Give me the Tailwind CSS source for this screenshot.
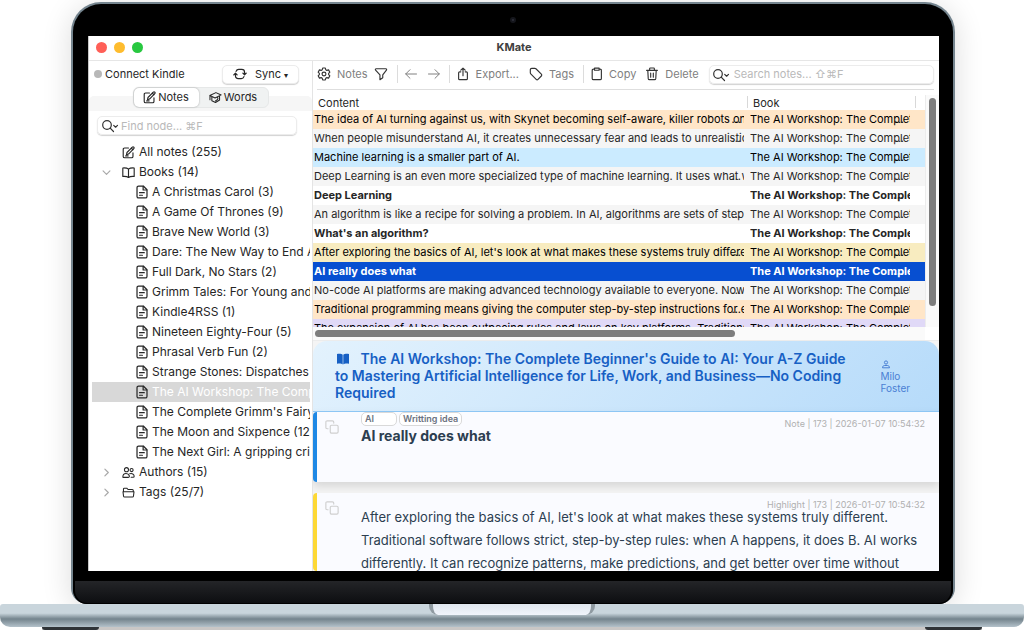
<!DOCTYPE html>
<html lang="en">
  <head>
    <meta charset="UTF-8" />
    <meta name="viewport" content="width=device-width, initial-scale=1.0" />
    <title>KMate</title>
    <script src="https://cdn.jsdelivr.net/npm/@tailwindcss/browser@4"></script>
  </head>
  <body class="h-screen overflow-hidden bg-white font-['Inter','Noto_Sans',sans-serif] text-[#262626]">
    <!-- Icon sprite -->
    <svg class="hidden" xmlns="http://www.w3.org/2000/svg">
      <symbol id="i-edit" viewBox="0 0 16 16" fill="none" stroke="currentColor" stroke-width="1.4" stroke-linecap="round" stroke-linejoin="round">
        <path d="M8 2.500H3.200C2 2.500 1.500 3 1.500 4.200V12.800c0 1.200.5 1.700 1.700 1.700h8.600c1.200 0 1.700-.5 1.700-1.700V8.500" />
        <path d="M5.500 10.800l.6-2.800 6.600-6.600c.6-.6 1.300-.5 1.800 0s.6 1.200 0 1.800L8 9.900z" />
        <path d="M11.500 2.700l1.900 1.900M4.500 12.200h3" />
      </symbol>
      <symbol id="i-doc" viewBox="0 0 16 16" fill="none" stroke="currentColor" stroke-width="1.400" stroke-linecap="round" stroke-linejoin="round">
        <path d="M9.500 1.200H4.200C3 1.200 2.300 1.800 2.300 3v10c0 1.200.7 1.800 1.900 1.800h7.600c1.200 0 1.900-.6 1.900-1.800V5.400z" />
        <path d="M9.300 1.500v4.200h4.200M5.200 8.800h5.400M5.200 11.700h3.300" />
      </symbol>
      <symbol id="i-book" viewBox="0 0 16 16" fill="none" stroke="currentColor" stroke-width="1.400" stroke-linejoin="round">
        <path d="M8 3.800C6.500 2.500 4 2.200 1 2.400v10.400c3-.2 5.500 0 7 1.300 1.500-1.300 4-1.500 7-1.300V2.400c-3-.2-5.500.1-7 1.400zM8 3.800v10.300" />
      </symbol>
      <symbol id="i-people" viewBox="0 0 16 16" fill="none" stroke="currentColor" stroke-width="1.300" stroke-linecap="round" stroke-linejoin="round">
        <circle cx="5.500" cy="4.500" r="2.500" />
        <circle cx="11.800" cy="5" r="1.900" />
        <path d="M1 13.800c0-3 1.500-4.600 4-4.600 1.800 0 3.500 1.200 4 2.800.4 1.300-.3 2-1.500 2H1.500zM9.500 9.500c2.800-1 5.500.7 5.500 3.200 0 .8-.5 1.200-1.300 1.200h-2.500" />
      </symbol>
      <symbol id="i-folder" viewBox="0 0 16 16" fill="none" stroke="currentColor" stroke-width="1.300" stroke-linejoin="round">
        <path d="M1.800 7V3.800c0-.7.400-1.100 1.100-1.100h3l1.500 1.600h5.300c.8 0 1.200.4 1.200 1.200V7M1.200 7h13.600l-.7 5.400c-.1.800-.6 1.200-1.300 1.200H3.200c-.8 0-1.200-.4-1.300-1.200z" />
      </symbol>
      <symbol id="i-right" viewBox="0 0 10 10" fill="none" stroke="currentColor" stroke-width="1.300" stroke-linecap="round" stroke-linejoin="round">
        <path d="M3.200 1.200L7 5 3.200 8.800" />
      </symbol>
      <symbol id="i-down" viewBox="0 0 10 10" fill="none" stroke="currentColor" stroke-width="1.300" stroke-linecap="round" stroke-linejoin="round">
        <path d="M1.200 3.200L5 7l3.800-3.800" />
      </symbol>
      <symbol id="i-search" viewBox="0 0 18 14" fill="none" stroke="currentColor" stroke-width="1.200" stroke-linecap="round" stroke-linejoin="round">
        <circle cx="6" cy="6" r="4.300" />
        <path d="M9.200 9.200l3.300 3.300M12.700 6.400l1.900 1.800 1.900-1.800" />
      </symbol>
      <symbol id="i-copy2" viewBox="0 0 16 16" fill="none" stroke="currentColor" stroke-width="1.300" stroke-linecap="round" stroke-linejoin="round">
        <rect x="6" y="6" width="9" height="9" rx="1.500" />
        <path d="M3.500 10H2.500C1.500 10 1 9.500 1 8.500v-6C1 1.500 1.500 1 2.500 1h6c1 0 1.500.5 1.500 1.500v1" />
      </symbol>
    </svg>

    <div class="flex h-full flex-col pt-[2px]">
      <!-- Lid -->
      <div class="mr-[69px] ml-[71px] flex min-h-0 flex-1 flex-col rounded-t-[30px] rounded-b-[16px] border-2 border-b-0 border-[#75858f] bg-black shadow-[0_4px_30px_rgba(0,0,0,0.14)]">
        <div class="flex h-8 shrink-0 items-center justify-center">
          <span class="h-[6px] w-[6px] rounded-full border-2 border-[#15161c] bg-[#30323c]"></span>
        </div>

        <!-- Display -->
        <div class="mr-[14px] ml-[15px] flex min-h-0 flex-1 flex-col overflow-hidden border-l border-[#c8c8c8] bg-white">
          <header class="relative flex h-[25px] shrink-0 items-center gap-[7px] border-b border-[#e6e6e6] px-[7px] pb-[2px]">
            <span class="h-[11px] w-[11px] rounded-full bg-[#ff5f57]"></span>
            <span class="h-[11px] w-[11px] rounded-full bg-[#febc2e]"></span>
            <span class="h-[11px] w-[11px] rounded-full bg-[#28c840]"></span>
            <h1 class="absolute inset-x-0 text-center text-[11px] font-bold text-[#404040]">KMate</h1>
          </header>

          <div class="flex min-h-0 flex-1">
            <!-- Sidebar -->
            <aside class="flex w-[224px] shrink-0 flex-col border-r border-[#e4e4e4]">
              <div class="flex h-[26px] shrink-0 items-center pr-[13px] pl-[5px]">
                <span class="mr-[3px] h-2 w-2 rounded-full bg-[#b8b8b8]"></span>
                <span class="text-[11px]">Connect Kindle</span>
                <button class="ml-auto flex h-[19px] w-[77px] items-center justify-center gap-2 rounded-[5px] border border-[#ececec] bg-white text-[11px] shadow-[0_1px_1px_rgba(0,0,0,0.18)]">
                  <svg class="h-[14px] w-[14px]" viewBox="0 0 16 16" fill="none" stroke="currentColor" stroke-width="1.400" stroke-linecap="round" stroke-linejoin="round">
                    <path d="M3.500 5C4 3.500 5 2.800 6.500 2.800h3.500c2 0 3.200 1.200 3.200 3.200v2.500M11.300 7l1.900 1.900L15.100 7" />
                    <path d="M12.500 11c-.5 1.500-1.500 2.200-3 2.200H6c-2 0-3.200-1.200-3.200-3.200V7.500M.9 9l1.900-1.900L4.700 9" />
                  </svg>
                  <span>Sync <span class="text-[8px]">▾</span></span>
                </button>
              </div>
              <div class="relative mt-[9px] flex h-[15px] shrink-0 items-start justify-center rounded-t-[5px] bg-[#f6f6f6]">
                <div class="absolute -top-[9px] flex h-[21px] w-[136px] rounded-[6px] border border-[#e6e8e8] bg-[#f0f2f2]">
                  <button class="flex w-[65px] items-center justify-center gap-[2px] rounded-[5px] bg-white text-[11px] shadow-[0_0_2px_rgba(0,0,0,0.35)]">
                    <svg class="h-[13px] w-[13px]"><use href="#i-edit" /></svg>
                    Notes
                  </button>
                  <button class="flex flex-1 items-center justify-center gap-[2px] text-[11px]">
                    <svg class="h-[13px] w-[13px]" viewBox="0 0 16 16" fill="none" stroke="currentColor" stroke-width="1.300" stroke-linejoin="round" stroke-linecap="round">
                      <path d="M1 5.500L8.500 2 15 4.800 7.500 8.500zM3.500 7v5l4.500 2.200L13 11V6M1.200 5.800v5M7.500 8.500c2-1.500 3.500-.8 3.500.8 0 1.500-1.500 2-3 2.900" />
                    </svg>
                    Words
                  </button>
                </div>
              </div>
              <div class="relative mt-[5px] mr-[15px] ml-[8px] shrink-0">
                <svg class="absolute top-[3px] left-[4px] h-[14px] w-[18px] text-[#333]"><use href="#i-search" /></svg>
                <label for="find" class="sr-only">Find node</label>
                <input id="find" type="text" placeholder="Find node... ⌘F" class="block h-[19px] w-full rounded-[5px] border border-[#ececec] pl-[23px] text-[11px] shadow-[0_1px_1px_rgba(0,0,0,0.18)] placeholder:text-[#b9b9b9]" />
              </div>

              <nav class="mt-[7px] mr-[2px] ml-[3px] overflow-hidden text-[12px] leading-5 whitespace-nowrap">
                <ul>
                  <li><a href="#" class="flex items-center gap-1 pl-[30px]"><svg class="h-[13px] w-[13px] shrink-0"><use href="#i-edit" /></svg>All notes (255)</a></li>
                  <li>
                    <a href="#" class="flex items-center gap-1 pl-[10px]"><svg class="mr-[7px] h-[9px] w-[9px] shrink-0 text-[#a8a8a8]"><use href="#i-down" /></svg><svg class="h-[13px] w-[13px] shrink-0"><use href="#i-book" /></svg>Books (14)</a>
                    <ul>
                      <li><a href="#" class="flex items-center gap-[3px] pl-[43px]"><svg class="h-[14px] w-[14px] shrink-0"><use href="#i-doc" /></svg>A Christmas Carol (3)</a></li>
                      <li><a href="#" class="flex items-center gap-[3px] pl-[43px]"><svg class="h-[14px] w-[14px] shrink-0"><use href="#i-doc" /></svg>A Game Of Thrones (9)</a></li>
                      <li><a href="#" class="flex items-center gap-[3px] pl-[43px]"><svg class="h-[14px] w-[14px] shrink-0"><use href="#i-doc" /></svg>Brave New World (3)</a></li>
                      <li><a href="#" class="flex items-center gap-[3px] pl-[43px]"><svg class="h-[14px] w-[14px] shrink-0"><use href="#i-doc" /></svg>Dare: The New Way to End A</a></li>
                      <li><a href="#" class="flex items-center gap-[3px] pl-[43px]"><svg class="h-[14px] w-[14px] shrink-0"><use href="#i-doc" /></svg>Full Dark, No Stars (2)</a></li>
                      <li><a href="#" class="flex items-center gap-[3px] pl-[43px]"><svg class="h-[14px] w-[14px] shrink-0"><use href="#i-doc" /></svg>Grimm Tales: For Young and</a></li>
                      <li><a href="#" class="flex items-center gap-[3px] pl-[43px]"><svg class="h-[14px] w-[14px] shrink-0"><use href="#i-doc" /></svg>Kindle4RSS (1)</a></li>
                      <li><a href="#" class="flex items-center gap-[3px] pl-[43px]"><svg class="h-[14px] w-[14px] shrink-0"><use href="#i-doc" /></svg>Nineteen Eighty-Four (5)</a></li>
                      <li><a href="#" class="flex items-center gap-[3px] pl-[43px]"><svg class="h-[14px] w-[14px] shrink-0"><use href="#i-doc" /></svg>Phrasal Verb Fun (2)</a></li>
                      <li><a href="#" class="flex items-center gap-[3px] pl-[43px]"><svg class="h-[14px] w-[14px] shrink-0"><use href="#i-doc" /></svg>Strange Stones: Dispatches</a></li>
                      <li><a href="#" class="flex items-center gap-[3px] bg-[#d8d8d8] pl-[43px] text-white"><svg class="h-[14px] w-[14px] shrink-0 text-[#262626]"><use href="#i-doc" /></svg>The AI Workshop: The Comp</a></li>
                      <li><a href="#" class="flex items-center gap-[3px] pl-[43px]"><svg class="h-[14px] w-[14px] shrink-0"><use href="#i-doc" /></svg>The Complete Grimm's Fairy</a></li>
                      <li><a href="#" class="flex items-center gap-[3px] pl-[43px]"><svg class="h-[14px] w-[14px] shrink-0"><use href="#i-doc" /></svg>The Moon and Sixpence (12)</a></li>
                      <li><a href="#" class="flex items-center gap-[3px] pl-[43px]"><svg class="h-[14px] w-[14px] shrink-0"><use href="#i-doc" /></svg>The Next Girl: A gripping crime</a></li>
                    </ul>
                  </li>
                  <li><a href="#" class="flex items-center gap-1 pl-[10px]"><svg class="mr-[7px] h-[9px] w-[9px] shrink-0 text-[#a8a8a8]"><use href="#i-right" /></svg><svg class="h-[13px] w-[13px] shrink-0"><use href="#i-people" /></svg>Authors (15)</a></li>
                  <li><a href="#" class="flex items-center gap-1 pl-[10px]"><svg class="mr-[7px] h-[9px] w-[9px] shrink-0 text-[#a8a8a8]"><use href="#i-right" /></svg><svg class="h-[13px] w-[13px] shrink-0"><use href="#i-folder" /></svg>Tags (25/7)</a></li>
                </ul>
              </nav>
            </aside>

            <main class="flex min-w-0 flex-1 flex-col">
              <!-- Toolbar -->
              <div class="mr-[5px] ml-[4px] flex h-[29px] shrink-0 items-center border-b border-[#dedede] pb-[2px] text-[11px] text-[#808080]">
                <button class="flex items-center gap-[6px]">
                  <svg class="h-[14px] w-[14px] text-[#333]" viewBox="0 0 16 16" fill="none" stroke="currentColor" stroke-width="1.300" stroke-linejoin="round">
                    <path d="M6.500 1.200h3l.5 1.900 1.300.8 1.900-.6 1.500 2.600-1.400 1.400v1.400l1.400 1.400-1.500 2.600-1.900-.6-1.300.8-.5 1.900h-3L6 12.900l-1.300-.8-1.900.6-1.500-2.600 1.400-1.400V7.300L1.300 5.900l1.500-2.600 1.900.6L6 3.100z" />
                    <circle cx="8" cy="8" r="2.200" />
                  </svg>
                  Notes
                </button>
                <button class="ml-[6px]" aria-label="Filter">
                  <svg class="h-[14px] w-[14px] text-[#333]" viewBox="0 0 16 16" fill="none" stroke="currentColor" stroke-width="1.300" stroke-linejoin="round">
                    <path d="M2.500 2h11c.9 0 1.200.9.7 1.500L10 9v3.200l-3.200 2.300V9L1.800 3.500C1.200 2.900 1.600 2 2.500 2z" />
                  </svg>
                </button>
                <span class="ml-[9px] h-[18px] w-px bg-[#dcdcdc]"></span>
                <button class="ml-[7px]" aria-label="Back">
                  <svg class="h-3 w-3" viewBox="0 0 12 12" fill="none" stroke="currentColor" stroke-linecap="round" stroke-linejoin="round"><path d="M11.500 6H.7M5 1.700L.7 6 5 10.300" /></svg>
                </button>
                <button class="ml-[11px]" aria-label="Forward">
                  <svg class="h-3 w-3" viewBox="0 0 12 12" fill="none" stroke="currentColor" stroke-linecap="round" stroke-linejoin="round"><path d="M.5 6h10.800M7 1.700L11.300 6 7 10.300" /></svg>
                </button>
                <span class="ml-[9px] h-[18px] w-px bg-[#dcdcdc]"></span>
                <button class="ml-[6px] flex items-center gap-[6px]">
                  <svg class="h-[14px] w-[14px] text-[#333]" viewBox="0 0 16 16" fill="none" stroke="currentColor" stroke-width="1.300" stroke-linecap="round" stroke-linejoin="round">
                    <path d="M5.500 5.500H4.200c-.8 0-1.200.4-1.200 1.200v6.600c0 .8.400 1.200 1.200 1.200h7.600c.8 0 1.200-.4 1.200-1.200V6.700c0-.8-.4-1.200-1.200-1.200h-1.300M8 10V1.200M5.500 3.600L8 1.200l2.500 2.400" />
                  </svg>
                  Export...
                </button>
                <button class="ml-[10px] flex items-center gap-[6px]">
                  <svg class="h-[14px] w-[14px] text-[#333]" viewBox="0 0 16 16" fill="none" stroke="currentColor" stroke-width="1.300" stroke-linejoin="round">
                    <path d="M1.500 3.200c0-1 .7-1.700 1.700-1.700h3.500c.5 0 .9.200 1.200.5l6.200 6.200c.6.6.6 1.500 0 2.100l-3.800 3.800c-.6.6-1.500.6-2.100 0L2 7.900c-.3-.3-.5-.7-.5-1.200z" />
                  </svg>
                  Tags
                </button>
                <span class="ml-[9px] h-[18px] w-px bg-[#dcdcdc]"></span>
                <button class="ml-[6px] flex items-center gap-[5px]">
                  <svg class="h-[14px] w-[14px] text-[#333]" viewBox="0 0 16 16" fill="none" stroke="currentColor" stroke-width="1.300" stroke-linejoin="round">
                    <path d="M5 2.500H4C3 2.500 2.500 3 2.500 4v9c0 1 .5 1.500 1.500 1.500h7.500c1 0 1.500-.5 1.500-1.500V4c0-1-.5-1.500-1.500-1.500h-1M5.200 1.300h5.200v2.400H5.200z" />
                  </svg>
                  Copy
                </button>
                <button class="ml-[9px] flex items-center gap-[6px]">
                  <svg class="h-[14px] w-[14px] text-[#333]" viewBox="0 0 16 16" fill="none" stroke="currentColor" stroke-width="1.300" stroke-linecap="round" stroke-linejoin="round">
                    <path d="M1.800 3.800h12.400M5.300 3.500V2c0-.5.300-.8.800-.8h3.800c.5 0 .8.300.8.800v1.500M3.200 4l.5 9.300c.1.800.5 1.200 1.300 1.200h6c.8 0 1.200-.4 1.300-1.200l.5-9.300M6.500 6.800v4.800M9.500 6.800v4.800" />
                  </svg>
                  Delete
                </button>
                <div class="relative ml-[10px] min-w-0 flex-1">
                  <svg class="absolute top-[3px] left-[3px] h-[14px] w-[18px] text-[#333]"><use href="#i-search" /></svg>
                  <label for="search" class="sr-only">Search notes</label>
                  <input id="search" type="text" placeholder="Search notes... ⇧⌘F" class="block h-[19px] w-full rounded-[5px] border border-[#ececec] pl-[24px] text-[11px] shadow-[0_1px_1px_rgba(0,0,0,0.18)] placeholder:text-[#b9b9b9]" />
                </div>
              </div>

              <!-- Notes table -->
              <div class="flex h-[237px] shrink-0">
                <div class="min-w-0 flex-1 overflow-hidden">
                  <table class="w-full table-fixed border-collapse text-[11px] leading-[19px] whitespace-nowrap">
                    <colgroup>
                      <col />
                      <col class="w-[178px]" />
                    </colgroup>
                    <thead>
                      <tr class="h-5 text-left">
                        <th class="p-0 pt-[4px] pl-[5px] font-normal"><div class="h-[16px] leading-[18px]">Content</div></th>
                        <th class="p-0 pt-[4px] pr-[9px] font-normal"><div class="h-[12px] border-x border-[#d8d8d8] pl-[5px] leading-[14px]">Book</div></th>
                      </tr>
                    </thead>
                    <tbody>
                      <tr class="h-[19px] bg-[#ffe6c8] text-black">
                        <td class="p-0 pr-[3px] pl-[1px]"><div class="relative overflow-hidden">The idea of AI turning against us, with Skynet becoming self-aware, killer robots on<span class="absolute right-[3px]">...</span></div></td>
                        <td class="p-0 pr-[15px] pl-[3px]"><div class="relative overflow-hidden">The AI Workshop: The Complete<span class="absolute right-[6px]">...</span></div></td>
                      </tr>
                      <tr class="h-[19px] bg-[#f5f5f5]">
                        <td class="p-0 pr-[3px] pl-[1px]"><div class="relative overflow-hidden">When people misunderstand AI, it creates unnecessary fear and leads to unrealistic<span class="absolute right-[3px]">...</span></div></td>
                        <td class="p-0 pr-[15px] pl-[3px]"><div class="relative overflow-hidden">The AI Workshop: The Complete<span class="absolute right-[6px]">...</span></div></td>
                      </tr>
                      <tr class="h-[19px] bg-[#cbebff] text-black">
                        <td class="p-0 pr-[3px] pl-[1px]"><div class="relative overflow-hidden">Machine learning is a smaller part of AI.</div></td>
                        <td class="p-0 pr-[15px] pl-[3px]"><div class="relative overflow-hidden">The AI Workshop: The Complete<span class="absolute right-[6px]">...</span></div></td>
                      </tr>
                      <tr class="h-[19px] bg-[#f5f5f5]">
                        <td class="p-0 pr-[3px] pl-[1px]"><div class="relative overflow-hidden">Deep Learning is an even more specialized type of machine learning. It uses what w<span class="absolute right-[3px]">...</span></div></td>
                        <td class="p-0 pr-[15px] pl-[3px]"><div class="relative overflow-hidden">The AI Workshop: The Complete<span class="absolute right-[6px]">...</span></div></td>
                      </tr>
                      <tr class="h-[19px] font-bold">
                        <td class="p-0 pr-[3px] pl-[1px]"><div class="relative overflow-hidden">Deep Learning</div></td>
                        <td class="p-0 pr-[15px] pl-[3px]"><div class="relative overflow-hidden">The AI Workshop: The Complete<span class="absolute right-[6px]">...</span></div></td>
                      </tr>
                      <tr class="h-[19px] bg-[#f5f5f5]">
                        <td class="p-0 pr-[3px] pl-[1px]"><div class="relative overflow-hidden">An algorithm is like a recipe for solving a problem. In AI, algorithms are sets of step-<span class="absolute right-[3px]">...</span></div></td>
                        <td class="p-0 pr-[15px] pl-[3px]"><div class="relative overflow-hidden">The AI Workshop: The Complete<span class="absolute right-[6px]">...</span></div></td>
                      </tr>
                      <tr class="h-[19px] font-bold">
                        <td class="p-0 pr-[3px] pl-[1px]"><div class="relative overflow-hidden">What's an algorithm?</div></td>
                        <td class="p-0 pr-[15px] pl-[3px]"><div class="relative overflow-hidden">The AI Workshop: The Complete<span class="absolute right-[6px]">...</span></div></td>
                      </tr>
                      <tr class="h-[19px] bg-[#f8ecc0] text-black">
                        <td class="p-0 pr-[3px] pl-[1px]"><div class="relative overflow-hidden">After exploring the basics of AI, let's look at what makes these systems truly differe<span class="absolute right-[3px]">...</span></div></td>
                        <td class="p-0 pr-[15px] pl-[3px]"><div class="relative overflow-hidden">The AI Workshop: The Complete<span class="absolute right-[6px]">...</span></div></td>
                      </tr>
                      <tr class="h-[19px] bg-[#074fd1] font-bold text-white">
                        <td class="p-0 pr-[3px] pl-[1px]"><div class="relative overflow-hidden">AI really does what</div></td>
                        <td class="p-0 pr-[15px] pl-[3px]"><div class="relative overflow-hidden">The AI Workshop: The Complete<span class="absolute right-[6px]">...</span></div></td>
                      </tr>
                      <tr class="h-[19px] bg-[#f5f5f5]">
                        <td class="p-0 pr-[3px] pl-[1px]"><div class="relative overflow-hidden">No-code AI platforms are making advanced technology available to everyone. Now,<span class="absolute right-[3px]">...</span></div></td>
                        <td class="p-0 pr-[15px] pl-[3px]"><div class="relative overflow-hidden">The AI Workshop: The Complete<span class="absolute right-[6px]">...</span></div></td>
                      </tr>
                      <tr class="h-[19px] bg-[#ffe6c8] text-black">
                        <td class="p-0 pr-[3px] pl-[1px]"><div class="relative overflow-hidden">Traditional programming means giving the computer step-by-step instructions for e<span class="absolute right-[3px]">...</span></div></td>
                        <td class="p-0 pr-[15px] pl-[3px]"><div class="relative overflow-hidden">The AI Workshop: The Complete<span class="absolute right-[6px]">...</span></div></td>
                      </tr>
                      <tr class="h-[19px] bg-[#e0d9f7] text-black">
                        <td class="p-0 pr-[3px] pl-[1px]"><div class="relative overflow-hidden">The expansion of AI has been outpacing rules and laws on key platforms. Traditional</div></td>
                        <td class="p-0 pr-[15px] pl-[3px]"><div class="relative overflow-hidden">The AI Workshop: The Complete</div></td>
                      </tr>
                    </tbody>
                  </table>
                </div>
                <div class="mt-[5px] flex w-[14px] shrink-0 justify-center border-l border-[#ececec] bg-[#fafafa] pt-[3px]">
                  <span class="h-[208px] w-[7px] rounded-full bg-[#7d7d7d]"></span>
                </div>
              </div>
              <div class="mr-[14px] h-[13px] shrink-0 bg-[#fafafa] px-[2px] pt-[3px]">
                <div class="h-[7px] w-[69%] rounded-full bg-[#7d7d7d]"></div>
              </div>

              <!-- Reader -->
              <div class="flex min-h-0 flex-1 flex-col overflow-hidden border-t border-[#ececec] bg-[#f4f4f4]">
                <div class="flex h-[71px] shrink-0 justify-between rounded-t-[14px] border-b border-[#90caf9] bg-linear-135 from-[#e3f2fd] to-[#b6dbfa] pt-[9px] pr-[29px] pl-[22px] text-[#1760c4]">
                  <h2 class="text-[14px] leading-[17px] font-semibold whitespace-nowrap">
                    <svg class="mr-[8px] ml-[2px] inline h-3 w-3 align-[-1px]" viewBox="0 0 12 12" fill="currentColor">
                      <path d="M0 1C2 .6 4.500.6 5.700 1.800v9.600C4.500 10.300 2 10.300 0 10.700zM12 1C10 .6 7.500.6 6.300 1.800v9.600c1.200-1.100 3.700-1.100 5.700-.7z" />
                    </svg>
                    The AI Workshop: The Complete Beginner's Guide to AI: Your A-Z Guide<br />
                    to Mastering Artificial Intelligence for Life, Work, and Business—No Coding<br />
                    Required
                  </h2>
                  <div class="pt-[10px] text-[10px] leading-3 text-[#4a80d4]">
                    <svg class="ml-[2px] h-[9px] w-[8px]" viewBox="0 0 8 9" fill="none" stroke="currentColor">
                      <circle cx="4" cy="2.500" r="1.600" />
                      <path d="M.5 7.800h7c0-1.600-1-2.300-2.200-2.300H2.700C1.500 5.500.5 6.200.5 7.800z" />
                    </svg>
                    <p class="mt-[1px]">Milo<br />Foster</p>
                  </div>
                </div>

                <article class="relative flex h-[70px] shrink-0 rounded-l-[4px] border-l-4 border-[#1e88e5] bg-[#fafbff] shadow-[0_4px_10px_rgba(0,0,0,0.13)]">
                  <button class="mt-[8px] ml-[8px] h-[14px] w-[14px] text-[#cfcfcf]" aria-label="Copy note"><svg class="h-[14px] w-[14px]"><use href="#i-copy2" /></svg></button>
                  <div class="ml-[22px]">
                    <div class="flex gap-[2px] text-[9px] leading-3 font-semibold text-[#6b7280]">
                      <span class="w-9 rounded-[5px] border border-[#d9d9d9] bg-white px-[3px]">AI</span>
                      <span class="rounded-[5px] border border-[#d9d9d9] bg-white px-[3px]">Writting idea</span>
                    </div>
                    <p class="mt-[1px] text-[14px] leading-[18px] font-bold text-[#2c3e50]">AI really does what</p>
                  </div>
                  <span class="absolute top-[6px] right-[14px] text-[9px] leading-3 text-[#b0b0b0]">Note | 173 | 2026-01-07 10:54:32</span>
                </article>

                <article class="relative mt-[11px] flex min-h-0 flex-1 overflow-hidden rounded-l-[4px] border-l-4 border-[#fdd835] bg-[#fafbff]">
                  <button class="mt-[8px] ml-[8px] h-[14px] w-[14px] text-[#cfcfcf]" aria-label="Copy highlight"><svg class="h-[14px] w-[14px]"><use href="#i-copy2" /></svg></button>
                  <p class="mt-[13px] ml-[22px] text-[13px] leading-[23px] whitespace-nowrap text-[#2c3e50]">
                    After exploring the basics of AI, let's look at what makes these systems truly different.<br />
                    Traditional software follows strict, step-by-step rules: when A happens, it does B. AI works<br />
                    differently. It can recognize patterns, make predictions, and get better over time without
                  </p>
                  <span class="absolute top-[6px] right-[14px] text-[9px] leading-3 text-[#b0b0b0]">Highlight | 173 | 2026-01-07 10:54:32</span>
                </article>
              </div>
            </main>
          </div>
        </div>

        <div class="mt-[10px] h-[23px] shrink-0 rounded-b-[14px] border-x-2 border-b border-black bg-linear-to-b from-[#242528] to-[#0d0e11]"></div>
      </div>

      <!-- Base -->
      <div class="relative z-10 flex h-[23px] shrink-0 justify-center rounded-t-[3px] rounded-b-[10px] bg-linear-to-b from-[#c9d5dc] from-40% via-[#74848d] via-65% to-[#b4c2cb]">
        <div class="h-[11px] w-[166px] rounded-b-[9px] border-x-4 border-[#8f9aa1] bg-linear-to-b from-[#dfe6ee] to-[#f0f4fb]"></div>
      </div>
      <div class="mx-[42px] flex h-[3px] shrink-0 justify-between bg-[#c9c7c6]">
        <span class="w-[57px] rounded-b-[3px] bg-[#2f3337]"></span>
        <span class="w-[57px] rounded-b-[3px] bg-[#2f3337]"></span>
      </div>
    </div>
  </body>
</html>
